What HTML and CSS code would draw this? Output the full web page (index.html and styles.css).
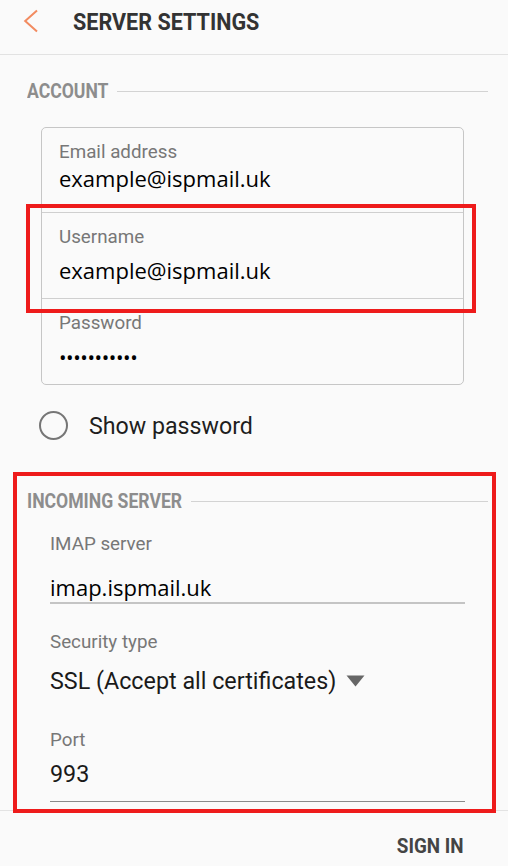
FILE: index.html
```html
<!DOCTYPE html>
<html lang="en">
<head>
<meta charset="utf-8">
<title>Server settings</title>
<link rel="stylesheet" href="styles.css">
</head>
<body>
<header class="appbar">
  <svg class="back" width="16" height="24" viewBox="0 0 16 24" aria-hidden="true">
    <path d="M14 1.5 L2.2 12 L14 22.5" fill="none" stroke="#f28b60" stroke-width="2"/>
  </svg>
  <h1 class="title"><span class="cond">SERVER SETTINGS</span></h1>
</header>

<div class="sec-head sec-account">
  <span class="sec-title w-account"><span class="cond">ACCOUNT</span></span>
  <span class="sec-line"></span>
</div>

<div class="card">
  <div class="field field-first">
    <div class="label">Email address</div>
    <div class="value">example@ispmail.uk</div>
  </div>
  <div class="field">
    <div class="label">Username</div>
    <div class="value">example@ispmail.uk</div>
  </div>
  <div class="field">
    <div class="label">Password</div>
    <div class="value dots">•••••••••••</div>
  </div>
  <div class="annot annot-user"></div>
</div>

<div class="show">
  <span class="ring"></span>
  <span class="show-text">Show password</span>
</div>

<section class="incoming">
  <div class="sec-head">
    <span class="sec-title w-incoming"><span class="cond">INCOMING SERVER</span></span>
    <span class="sec-line"></span>
  </div>
  <div class="in-fields">
    <div class="label lbl-imap">IMAP server</div>
    <div class="value in-value">imap.ispmail.uk</div>
    <div class="label lbl-sec">Security type</div>
    <div class="select">
      <span>SSL (Accept all certificates)</span>
      <svg class="caret" width="19" height="12" viewBox="0 0 19 12" aria-hidden="true">
        <path d="M0.5 0.5 H18.5 L9.5 11.5 Z" fill="#666"/>
      </svg>
    </div>
    <div class="label lbl-port">Port</div>
    <div class="port">993</div>
  </div>
  <div class="annot annot-incoming"></div>
</section>

<footer class="footer">
  <span class="sign"><span class="cond cond-right">SIGN IN</span></span>
</footer>
</body>
</html>
```

FILE: styles.css
```css
* { box-sizing: border-box; margin: 0; padding: 0; }
html, body { background: #fafafa; }
body {
  width: 508px;
  height: 866px;
  overflow: hidden;
  font-family: Roboto, "Noto Sans", sans-serif;
  color: #1c1c1c;
}

.cond {
  display: inline-block;
  white-space: nowrap;
  transform: scaleX(0.88);
  transform-origin: 0 50%;
}
.cond-right { transform-origin: 100% 50%; transform: scaleX(0.92); }

/* app bar */
.appbar {
  height: 55px;
  border-bottom: 1px solid #e2e2e2;
  display: flex;
  align-items: flex-start;
}
.back { flex: none; margin: 9px 0 0 23px; }
.title {
  margin: 7px 0 0 34px;
  font-size: 24.5px;
  line-height: 30px;
  font-weight: 700;
  color: #333;
}

/* section headers */
.sec-head {
  display: flex;
  align-items: center;
  gap: 9px;
  height: 24px;
  padding: 0 20px 0 27px;
}
.sec-account { margin-top: 24px; }
.sec-title {
  flex: none;
  font-size: 20px;
  line-height: 24px;
  font-weight: 700;
  color: #8d8d8d;
  white-space: nowrap;
}
.w-account { width: 81px; }
.w-incoming { width: 155px; }
.sec-line { flex: 1; height: 1px; background: #d3d3d3; }

/* account card */
.card {
  position: relative;
  margin: 24px 44px 0 41px;
  border: 1px solid #c6c6c6;
  border-radius: 5px;
}
.field { padding: 14px 18px 14px 17px; }
.field + .field { border-top: 1px solid #cfcfcf; }
.field-first { padding-bottom: 20px; }

.label {
  font-size: 18.8px;
  line-height: 20px;
  color: #777;
}
.value {
  font-family: "Open Sans", "Noto Sans", sans-serif;
  font-size: 22px;
  line-height: 28px;
  color: #000;
  margin-top: 9px;
  white-space: nowrap;
}
.field-first .value { margin-top: 2px; }
.dots {
  font-size: 20px;
  letter-spacing: -0.4px;
  line-height: 25px;
  padding-top: 3px;
}

.annot {
  position: absolute;
  border: 4px solid #ee1b1b;
  pointer-events: none;
}
.annot-user { left: -16px; top: 76px; width: 450px; height: 109px; }

/* show password */
.show {
  display: flex;
  align-items: center;
  gap: 21px;
  height: 30px;
  margin: 25px 0 0 39px;
}
.ring {
  flex: none;
  width: 29px;
  height: 29px;
  border: 2px solid #767676;
  border-radius: 50%;
}
.show-text {
  font-size: 23.2px;
  line-height: 30px;
  color: #1e1e1e;
  margin-top: 2px;
}

/* incoming server */
.incoming {
  position: relative;
  margin-top: 32px;
  padding-top: 17px;
}
.in-fields { padding: 0 43px 0 50px; }
.lbl-imap { margin-top: 21px; }
.in-value {
  margin-top: 19px;
  padding-bottom: 1px;
  border-bottom: 2px solid #c4c4c4;
}
.lbl-sec { margin-top: 28px; }
.select {
  display: flex;
  align-items: center;
  gap: 10px;
  margin-top: 15px;
  font-size: 23.3px;
  line-height: 28px;
  color: #1a1a1a;
}
.caret { flex: none; }
.lbl-port { margin-top: 35px; }
.port {
  margin-top: 9.5px;
  font-size: 23.3px;
  line-height: 28px;
  color: #1a1a1a;
  padding-bottom: 13px;
  border-bottom: 1.5px solid #8a8a8a;
}
.annot-incoming { left: 13px; top: 0; width: 483px; height: 341px; }

/* footer */
.footer {
  margin-top: 8px;
  border-top: 1px solid #e3e3e3;
  padding: 23px 44px 0 0;
  text-align: right;
}
.sign {
  font-size: 20.5px;
  line-height: 24px;
  font-weight: 700;
  color: #444;
}
```
